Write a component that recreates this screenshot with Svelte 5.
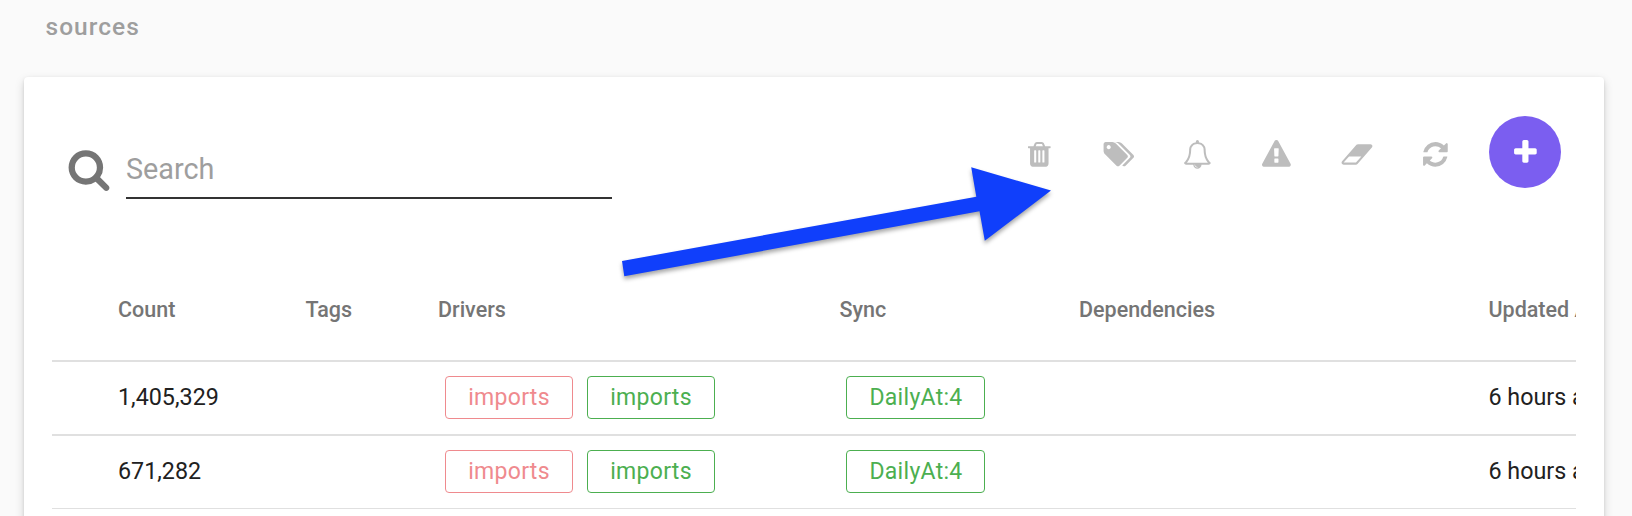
<script>
  const actions = [
    { name: 'Delete', w: 22.6, h: 24.7, box: '192 128 1408 1536', d: 'M704 1376v-704q0-14-9-23t-23-9h-64q-14 0-23 9t-9 23v704q0 14 9 23t23 9h64q14 0 23-9t9-23zm256 0v-704q0-14-9-23t-23-9h-64q-14 0-23 9t-9 23v704q0 14 9 23t23 9h64q14 0 23-9t9-23zm256 0v-704q0-14-9-23t-23-9h-64q-14 0-23 9t-9 23v704q0 14 9 23t23 9h64q14 0 23-9t9-23zm-544-992h448l-48-117q-7-9-17-11h-317q-10 2-17 11zm928 32v64q0 14-9 23t-23 9h-96v948q0 83-47 143.5t-113 60.5h-832q-66 0-113-58.5t-47-141.5v-952h-96q-14 0-23-9t-9-23v-64q0-14 9-23t23-9h309l70-167q15-37 54-63t79-26h320q40 0 79 26t54 63l70 167h309q14 0 23 9t9 23z' },
    { name: 'Tags', w: 30.8, h: 24.7, box: '-36 128 1920 1536', d: 'M448 448q0-53-37.5-90.5t-90.5-37.5-90.5 37.5-37.5 90.5 37.5 90.5 90.5 37.5 90.5-37.5 37.5-90.5zm1067 576q0 53-37 90l-491 492q-39 37-91 37-53 0-90-37l-715-716q-38-37-64.5-101t-26.5-117v-416q0-52 38-90t90-38h416q53 0 117 26.5t102 64.5l715 714q37 39 37 91zm384 0q0 53-37 90l-491 492q-39 37-91 37-36 0-59-14t-53-45l470-470q37-37 37-90 0-52-37-91l-715-714q-38-38-102-64.5t-117-26.5h224q53 0 117 26.5t102 64.5l715 714q37 39 37 91z' },
    { name: 'Alerts', w: 28.8, h: 28.8, box: '0 0 1792 1792', d: 'M912 1696q0-16-16-16-59 0-101.5-42.5t-42.5-101.5q0-16-16-16t-16 16q0 73 51.5 124.5t124.5 51.5q16 0 16-16zm-666-288h1300q-266-300-266-832 0-51-24-105t-69-103-121.5-80.5-169.5-31.5-169.5 31.5-121.5 80.5-69 103-24 105q0 532-266 832zm1482 0q0 52-38 90t-90 38h-448q0 106-75 181t-181 75-181-75-75-181h-448q-52 0-90-38t-38-90q50-42 91-88t85-119.5 74.5-158.5 50-206 19.5-260q0-152 117-282.5t307-158.5q-8-19-8-39 0-40 28-68t68-28 68 28 28 68q0 20-8 39 190 28 307 158.5t117 282.5q0 139 19.5 260t50 206 74.5 158.5 85 119.5 91 88z' },
    { name: 'Warnings', w: 28.8, h: 28.8, box: '0 0 1792 1792', d: 'M1024 1375v-190q0-14-9.5-23.5t-22.5-9.5h-192q-13 0-22.5 9.5t-9.5 23.5v190q0 14 9.5 23.5t22.5 9.5h192q13 0 22.5-9.5t9.5-23.5zm-2-374l18-459q0-12-10-19-13-11-24-11h-220q-11 0-24 11-10 7-10 21l17 457q0 10 10 16.5t24 6.5h185q14 0 23.5-6.5t10.5-16.5zm-14-934l768 1408q35 63-2 126-17 29-46.5 46t-63.5 17h-1536q-34 0-63.5-17t-46.5-46q-37-63-2-126l768-1408q17-31 47-49t65-18 65 18 47 49z' },
    { name: 'Erase', w: 30.8, h: 28.8, box: '-36 0 1920 1792', d: 'M896 1408l336-384h-768l-336 384h768zm1013-1077q15 34 9.5 71.5t-30.5 65.5l-896 1024q-38 44-96 44h-768q-38 0-69.5-20.5t-47.5-54.5q-15-34-9.5-71.5t30.5-65.5l896-1024q38-44 96-44h768q38 0 69.5 20.5t47.5 54.5z' },
    { name: 'Refresh', w: 28.8, h: 28.8, box: '0 0 1792 1792', d: 'M1639 1056q0 5-1 7-64 268-268 434.5t-478 166.5q-146 0-282.5-55t-243.5-157l-129 129q-19 19-45 19t-45-19-19-45v-448q0-26 19-45t45-19h448q26 0 45 19t19 45-19 45l-137 137q71 66 161 102t187 36q134 0 250-65t186-179q11-17 53-117 8-23 30-23h192q13 0 22.5 9.5t9.5 22.5zm25-800v448q0 26-19 45t-45 19h-448q-26 0-45-19t-19-45 19-45l138-138q-148-137-349-137-134 0-250 65t-186 179q-11 17-53 117-8 23-30 23h-199q-13 0-22.5-9.5t-9.5-22.5v-7q65-268 270-434.5t480-166.5q146 0 284 55.5t245 156.5l130-129q19-19 45-19t45 19 19 45z' }
  ];
  const columns = ['Count', 'Tags', 'Drivers', 'Sync', 'Dependencies', 'Updated At'];
  const rows = [
    { count: '1,405,329', sync: 'DailyAt:4', updated: '6 hours ago' },
    { count: '671,282', sync: 'DailyAt:4', updated: '6 hours ago' }
  ];
</script>

<main class="page">
  <h1>sources</h1>
  <section class="card">
    <div class="toolbar">
      <label class="search">
        <svg class="lens" viewBox="0 0 1792 1792"><path d="M1216 832q0-185-131.5-316.5t-316.5-131.5-316.5 131.5-131.5 316.5 131.5 316.5 316.5 131.5 316.5-131.5 131.5-316.5zm512 832q0 52-38 90t-90 38q-54 0-90-38l-343-342q-179 124-399 124-143 0-273.5-55.5t-225-150-150-225-55.5-273.5 55.5-273.5 150-225 225-150 273.5-55.5 273.5 55.5 225 150 150 225 55.5 273.5q0 220-124 399l343 343q37 37 37 90z" /></svg>
        <input placeholder="Search" />
      </label>
      <div class="actions">
        {#each actions as a}
          <button class="action" aria-label={a.name}>
            <svg width={a.w} height={a.h} viewBox={a.box}><path d={a.d} /></svg>
          </button>
        {/each}
        <button class="add" aria-label="Add">
          <svg width="28.8" height="28.8" viewBox="0 0 1792 1792"><path d="M1600 736v192q0 40-28 68t-68 28h-416v416q0 40-28 68t-68 28h-192q-40 0-68-28t-28-68v-416h-416q-40 0-68-28t-28-68v-192q0-40 28-68t68-28h416v-416q0-40 28-68t68-28h192q40 0 68 28t28 68v416h416q40 0 68 28t28 68z" /></svg>
        </button>
      </div>
    </div>

    <div class="table">
      <div class="row head">
        {#each columns as c}<div>{c}</div>{/each}
      </div>
      {#each rows as r}
        <div class="row">
          <div>{r.count}</div>
          <div></div>
          <div class="chips">
            <span class="chip red">imports</span>
            <span class="chip">imports</span>
          </div>
          <div class="chips"><span class="chip sync">{r.sync}</span></div>
          <div></div>
          <div>{r.updated}</div>
        </div>
      {/each}
    </div>
  </section>

  <svg class="arrow" width="450" height="100" viewBox="612 157 450 100">
    <path d="M622 261L976.3 196.7L971.2 167.2L1051 190.5L984.8 240.8L979.5 211.3L624.3 276.2Z" />
  </svg>
</main>

<style>
  :global(body) {
    background: #fafafa;
    overflow: hidden;
  }
  .page {
    position: relative;
    box-sizing: border-box;
    height: 516px;
    padding: 0 28px 0 24px;
    overflow: hidden;
    font-family: Roboto, sans-serif;
    color: #212121;
  }
  h1 {
    margin: 0;
    height: 77px;
    padding-left: 21.5px;
    box-sizing: border-box;
    padding-top: 10.5px;
    font-size: 24.5px;
    line-height: 32px;
    font-weight: 500;
    letter-spacing: 1.05px;
    color: #9e9e9e;
  }
  .card {
    height: 500px;
    background: #fff;
    border-radius: 4px;
    box-shadow: 0 4px 10px rgba(0, 0, 0, 0.17), 0 1px 3px rgba(0, 0, 0, 0.1);
    padding: 0 28px;
  }
  .toolbar {
    display: flex;
    justify-content: space-between;
    height: 189px;
    box-sizing: border-box;
    padding: 39px 15px 0 14px;
  }
  .search {
    display: flex;
    width: 546px;
    height: 83px;
  }
  .lens {
    width: 44px;
    height: 44px;
    margin-top: 31px;
    margin-left: 0.5px;
    margin-right: 15.5px;
    fill: #757575;
    flex: none;
  }
  input {
    flex: 1;
    min-width: 0;
    margin-top: 31px;
    height: 52px;
    box-sizing: border-box;
    border: 0;
    border-bottom: 2px solid #333;
    padding: 0 0 7px;
    background: none;
    outline: 0;
    font: 28.8px Roboto, sans-serif;
  }
  input::placeholder {
    color: #9e9e9e;
    opacity: 1;
  }
  button {
    border: 0;
    padding: 0;
    background: none;
    display: flex;
    align-items: center;
    justify-content: center;
  }
  .actions {
    display: flex;
  }
  .action {
    width: 79.25px;
    height: 76px;
  }
  .action svg {
    fill: #bdbdbd;
    overflow: visible;
  }
  .add {
    width: 72px;
    height: 72px;
    margin-left: 14px;
    border-radius: 50%;
    background: #7b5ef0;
    fill: #fff;
  }
  .table {
    overflow: hidden;
  }
  .row {
    display: grid;
    grid-template-columns: 187.5px 132.5px 401.5px 239.5px 409.5px 200px;
    align-items: center;
    width: 1637px;
    height: 74px;
    box-sizing: border-box;
    padding-left: 66px;
    padding-bottom: 2px;
    border-bottom: 2px solid #e0e0e0;
    font-size: 23.3px;
    white-space: nowrap;
  }
  .head {
    height: 96px;
    padding-bottom: 7px;
    font-size: 21.5px;
    font-weight: 500;
    color: #757575;
  }
  .row:last-child {
    height: 73px;
    border-bottom-width: 1px;
  }
  .chips {
    display: flex;
    gap: 14px;
    padding-left: 7px;
  }
  .chip {
    box-sizing: border-box;
    width: 128px;
    height: 43px;
    border: 1px solid #4caf50;
    border-radius: 4px;
    color: #4caf50;
    text-align: center;
    font-size: 23px;
    line-height: 41px;
    letter-spacing: 0.3px;
  }
  .chip.red {
    color: #ef8a8e;
    border-color: #ef8a8e;
  }
  .chip.sync {
    width: 139px;
    margin-left: -0.5px;
    padding-left: 1px;
  }
  .arrow {
    position: absolute;
    left: 612px;
    top: 157px;
    overflow: visible;
    fill: #103ffb;
    filter: drop-shadow(0 3px 2px rgba(0, 0, 0, 0.35));
  }
</style>
